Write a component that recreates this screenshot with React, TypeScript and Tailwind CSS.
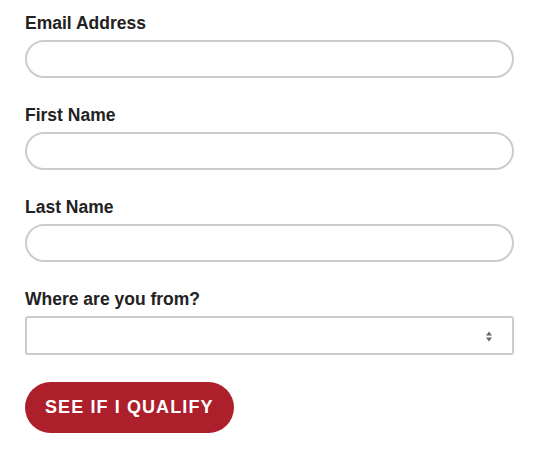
import { useState } from 'react';

const font = { fontFamily: '"Liberation Sans", Arial, Helvetica, sans-serif' };

function Field({ label, id }: { label: string; id: string }) {
  const [value, setValue] = useState('');
  return (
    <div className="mb-[25px] flex flex-col">
      <label htmlFor={id} className="mb-[5px] text-[17.5px] leading-6 font-bold text-[#222]">
        {label}
      </label>
      <input
        id={id}
        value={value}
        onChange={(e) => setValue(e.target.value)}
        className="h-[38px] w-full rounded-full border-2 border-[#cccccc] bg-white px-4 text-[16px] outline-none"
      />
    </div>
  );
}

export default function App() {
  const [country, setCountry] = useState('');

  return (
    <main className="min-h-screen bg-white" style={font}>
      <form
        className="ml-[25px] flex w-[489px] flex-col pt-[11px]"
        onSubmit={(e) => e.preventDefault()}
      >
        <Field id="email" label="Email Address" />
        <Field id="first" label="First Name" />
        <Field id="last" label="Last Name" />

        {/* Country select */}
        <div className="flex flex-col">
          <label htmlFor="country" className="mb-[5px] text-[17.5px] leading-6 font-bold text-[#222]">
            Where are you from?
          </label>
          <div className="relative">
            <select
              id="country"
              value={country}
              onChange={(e) => setCountry(e.target.value)}
              className="h-[39px] w-full appearance-none rounded-[3px] border-2 border-[#cccccc] bg-white px-3 text-[16px] outline-none"
            >
              <option value=""></option>
              <option value="us">United States</option>
              <option value="ca">Canada</option>
            </select>
            <svg
              className="pointer-events-none absolute top-[15px] right-[22px]"
              width="6"
              height="11"
              viewBox="0 0 6 11"
            >
              <path d="M3 0.5 L6 4.5 L0 4.5 Z" fill="#666" />
              <path d="M0 6.5 L6 6.5 L3 10.5 Z" fill="#666" />
            </svg>
          </div>
        </div>

        <div className="mt-[27px]">
          <button
            type="submit"
            className="h-[51px] rounded-full bg-[#ad1f2b] px-5 text-[18px] font-bold tracking-[1.1px] text-white uppercase"
          >
            See if I qualify
          </button>
        </div>
      </form>
    </main>
  );
}
